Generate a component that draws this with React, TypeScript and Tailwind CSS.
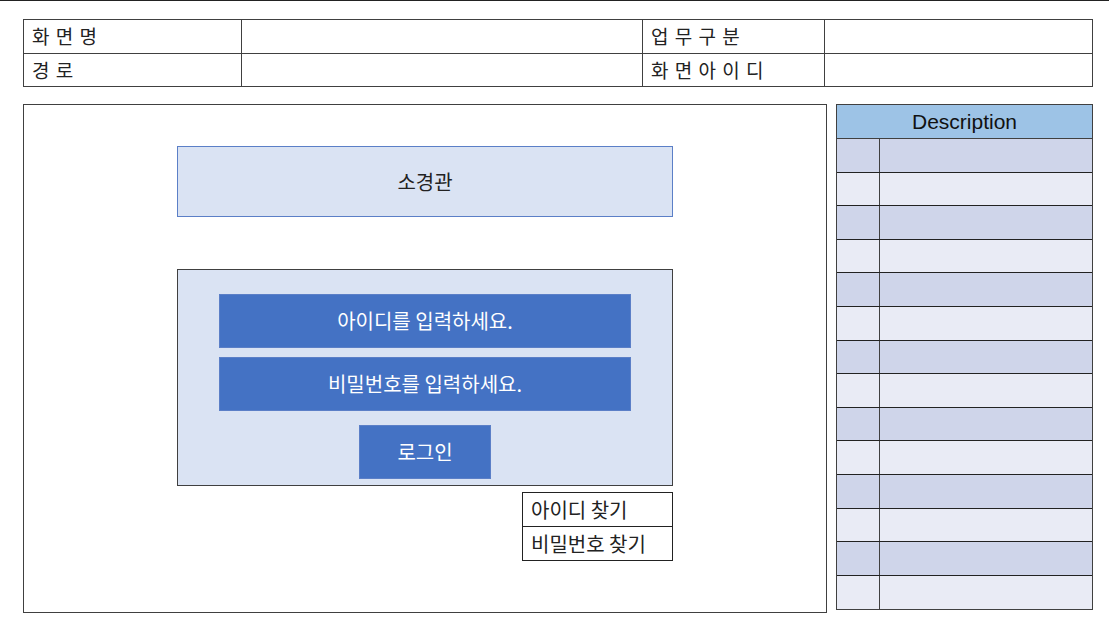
const kr = { fontFamily: '"Noto Sans CJK KR", "Noto Sans", sans-serif' };

function HeaderTable() {
  const cell = 'border-[#404040] px-2 flex items-center text-[19px] text-[#222] tracking-[0.33em]';
  return (
    <div className="ml-[23px] mt-[18px] w-[1070px] border border-[#404040] grid grid-cols-[218px_401px_182px_1fr]" style={kr}>
      <div className={`${cell} h-[34px] border-r border-b`}>화면명</div>
      <div className={`${cell} border-r border-b`}></div>
      <div className={`${cell} border-r border-b`}>업무구분</div>
      <div className={`${cell} border-b`}></div>
      <div className={`${cell} h-[32px] border-r`}>경로</div>
      <div className={`${cell} border-r`}></div>
      <div className={`${cell} border-r`}>화면아이디</div>
      <div className={cell}></div>
    </div>
  );
}

function Canvas() {
  return (
    <div className="w-[804px] h-[509px] border border-[#404040] bg-white flex flex-col items-center" style={kr}>
      <div className="mt-[41px] w-[496px] h-[71px] bg-[#dae3f3] border border-[#5b7fc7] flex items-center justify-center text-[20px] text-[#222]">
        소경관
      </div>
      <div className="mt-[52px] w-[496px] h-[217px] bg-[#dae3f3] border border-[#404040] flex flex-col items-center pt-[24px]">
        <div className="w-[412px] h-[54px] bg-[#4472c4] border border-[#5b7fc7] flex items-center justify-center text-[20px] text-white">
          아이디를 입력하세요.
        </div>
        <div className="mt-[9px] w-[412px] h-[54px] bg-[#4472c4] border border-[#5b7fc7] flex items-center justify-center text-[20px] text-white">
          비밀번호를 입력하세요.
        </div>
        <div className="mt-[14px] w-[132px] h-[54px] bg-[#4472c4] border border-[#5b7fc7] flex items-center justify-center text-[20px] text-white">
          로그인
        </div>
      </div>
      <div className="mt-[6px] self-end mr-[153px] w-[151px] border border-[#222] text-[20px] text-[#222]">
        <div className="h-[34px] border-b border-[#222] flex items-center pl-2">아이디 찾기</div>
        <div className="h-[33px] flex items-center pl-2">비밀번호 찾기</div>
      </div>
    </div>
  );
}

function Description() {
  const rows = Array.from({ length: 14 }, (_, i) => i);
  return (
    <div className="w-[257px] border border-[#404040]">
      <div className="h-[34px] bg-[#9dc3e6] border-b border-[#404040] flex items-center justify-center text-[21px] text-[#111]" style={{ fontFamily: '"Liberation Sans", Arial, sans-serif' }}>
        Description
      </div>
      {rows.map((i) => (
        <div
          key={i}
          className={`h-[33.6px] flex ${i % 2 === 0 ? 'bg-[#cfd5ea]' : 'bg-[#e9ebf5]'} ${i < 13 ? 'border-b border-[#222]' : ''}`}
        >
          <div className="w-[43px] border-r border-[#404040]"></div>
          <div className="flex-1"></div>
        </div>
      ))}
    </div>
  );
}

export default function App() {
  return (
    <div className="w-[1109px] h-[631px] bg-white border-t border-[#222] overflow-hidden">
      <HeaderTable />
      <div className="ml-[23px] mt-[17px] flex gap-[9px] items-start">
        <Canvas />
        <Description />
      </div>
    </div>
  );
}
